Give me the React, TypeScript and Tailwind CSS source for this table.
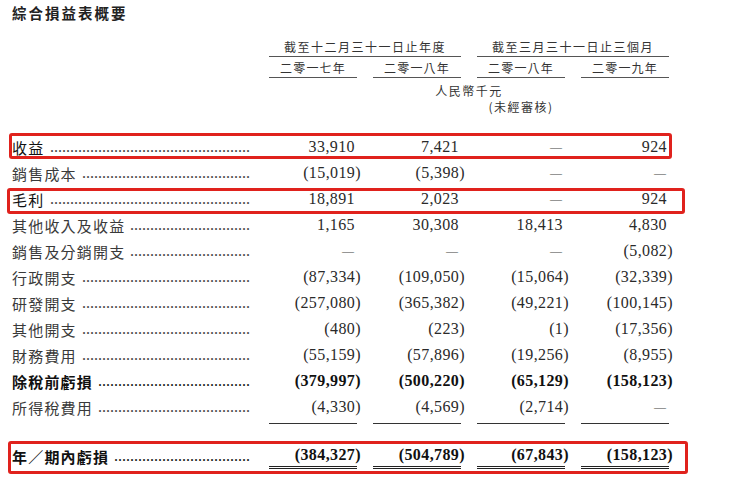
import React from "react";

type Row = {
  label: string;
  v: string[];
  bold?: boolean;
  box?: "a" | "b";
  underline?: boolean;
  dark?: boolean;
};

const rows: Row[] = [
  { label: "收益", v: ["33,910", "7,421", "—", "924"], box: "a", dark: true },
  { label: "銷售成本", v: ["(15,019)", "(5,398)", "—", "—"] },
  { label: "毛利", v: ["18,891", "2,023", "—", "924"], box: "b", dark: true },
  { label: "其他收入及收益", v: ["1,165", "30,308", "18,413", "4,830"] },
  { label: "銷售及分銷開支", v: ["—", "—", "—", "(5,082)"] },
  { label: "行政開支", v: ["(87,334)", "(109,050)", "(15,064)", "(32,339)"] },
  { label: "研發開支", v: ["(257,080)", "(365,382)", "(49,221)", "(100,145)"] },
  { label: "其他開支", v: ["(480)", "(223)", "(1)", "(17,356)"] },
  { label: "財務費用", v: ["(55,159)", "(57,896)", "(19,256)", "(8,955)"] },
  { label: "除稅前虧損", v: ["(379,997)", "(500,220)", "(65,129)", "(158,123)"], bold: true },
  { label: "所得稅費用", v: ["(4,330)", "(4,569)", "(2,714)", "—"], underline: true },
];

const CJK = "font-['Noto_Sans_CJK_TC','Noto_Sans_CJK_SC',sans-serif]";
const SERIF = "font-['Liberation_Serif','Times_New_Roman',serif]";

function Value({ text, bold, double }: { text: string; bold?: boolean; double?: boolean }) {
  const paren = text.startsWith("(");
  const dash = text === "—";
  return (
    <div
      className={
        "w-[88px] h-[26px] flex items-center justify-end " +
        (double ? "border-b-[3px] border-double border-[#222] " : "")
      }
    >
      {dash ? (
        <span className={SERIF + " text-[12px] leading-none text-[#444] pr-[3px]"}>—</span>
      ) : (
        <span
          className={
            SERIF +
            " text-[16px] leading-none tracking-[0.4px] whitespace-nowrap " +
            (bold ? "font-bold text-[#111] " : "text-[#2a2a2a] ") +
            (paren ? "-mr-[4px]" : "pr-[2px]")
          }
        >
          {text}
        </span>
      )}
    </div>
  );
}

function Label({ text, bold, dark }: { text: string; bold?: boolean; dark?: boolean }) {
  const labelW = Array.from(text).length * 16.2;
  const n = Math.max(0, Math.floor((238 - 4 - labelW) / 4));
  return (
    <div className="w-[238px] h-[26px] flex items-center whitespace-nowrap">
      <span
        className={
          CJK +
          " text-[15px] leading-none tracking-[1.2px] shrink-0 " +
          (bold ? "font-bold text-[#111]" : dark ? "text-[#111]" : "text-[#3a3a3a]")
        }
      >
        {text}
      </span>
      <span
        className={
          SERIF +
          " ml-auto text-[16px] leading-none " +
          (bold ? "text-[#111]" : "text-[#444]")
        }
      >
        {".".repeat(n)}
      </span>
    </div>
  );
}

export default function App() {
  return (
    <div className="w-[730px] h-[483px] bg-white overflow-hidden pl-3">
      <div className={CJK + " pt-[4px] text-[14.5px] leading-[18px] font-bold tracking-[2px] text-[#222]"}>
        綜合損益表概要
      </div>

      {/* group headers */}
      <div className="flex mt-[16px]">
        <div className="w-[238px] mr-[19px]" />
        <div className="flex gap-4">
          <div className={CJK + " w-[192px] text-center text-[12px] leading-[18px] tracking-[1.5px] text-[#333] border-b border-[#555]"}>
            截至十二月三十一日止年度
          </div>
          <div className={CJK + " w-[192px] text-center text-[12px] leading-[18px] tracking-[1.5px] text-[#333] border-b border-[#555]"}>
            截至三月三十一日止三個月
          </div>
        </div>
      </div>
      <div className="flex">
        <div className="w-[238px] mr-[19px]" />
        <div className="flex gap-4">
          {["二零一七年", "二零一八年", "二零一八年", "二零一九年"].map((y, i) => (
            <div
              key={i}
              className={CJK + " w-[88px] pt-[2px] text-center text-[12px] leading-[18px] tracking-[1.2px] text-[#333] border-b border-[#555]"}
            >
              {y}
            </div>
          ))}
        </div>
      </div>
      <div className="flex mt-[5px]">
        <div className="w-[238px] mr-[19px]" />
        <div className={CJK + " w-[400px] text-center text-[12px] leading-[16px] tracking-[1.5px] text-[#333]"}>
          人民幣千元
        </div>
      </div>
      <div className="flex">
        <div className="w-[238px] mr-[19px]" />
        <div className="w-[104px]" />
        <div className={CJK + " w-[296px] text-center text-[12px] leading-[16px] tracking-[1.5px] text-[#333]"}>
          (未經審核)
        </div>
      </div>

      {/* data rows */}
      <div className="mt-[19px]">
        {rows.map((r, i) => (
          <div key={i} className={"relative flex items-start " + (r.underline ? "h-[30px]" : "h-[26px]")}>
            <Label text={r.label} bold={r.bold} dark={r.dark} />
            <div className="ml-[19px] flex gap-4">
              {r.v.map((t, j) =>
                r.underline ? (
                  <div key={j} className="h-[30px] w-[88px] border-b border-[#333]">
                    <Value text={t} bold={r.bold} />
                  </div>
                ) : (
                  <Value key={j} text={t} bold={r.bold} />
                )
              )}
            </div>
            {r.box === "a" && (
              <div className="absolute left-[-3px] top-[-1px] w-[663px] h-[26px] border-[3px] border-[#e0221d] rounded-[3px]" />
            )}
            {r.box === "b" && (
              <div className="absolute left-[-5px] top-[2px] w-[678px] h-[26px] border-[3px] border-[#e0221d] rounded-[3px]" />
            )}
          </div>
        ))}

        <div className="relative flex items-start h-[27px] mt-[19px]">
          <Label text="年／期內虧損" bold />
          <div className="ml-[19px] flex gap-4">
            {["(384,327)", "(504,789)", "(67,843)", "(158,123)"].map((t, j) => (
              <Value key={j} text={t} bold double />
            ))}
          </div>
          <div className="absolute left-[-4px] top-[-2px] w-[680px] h-[33px] border-[3px] border-[#e0221d] rounded-[3px]" />
        </div>
      </div>
    </div>
  );
}
